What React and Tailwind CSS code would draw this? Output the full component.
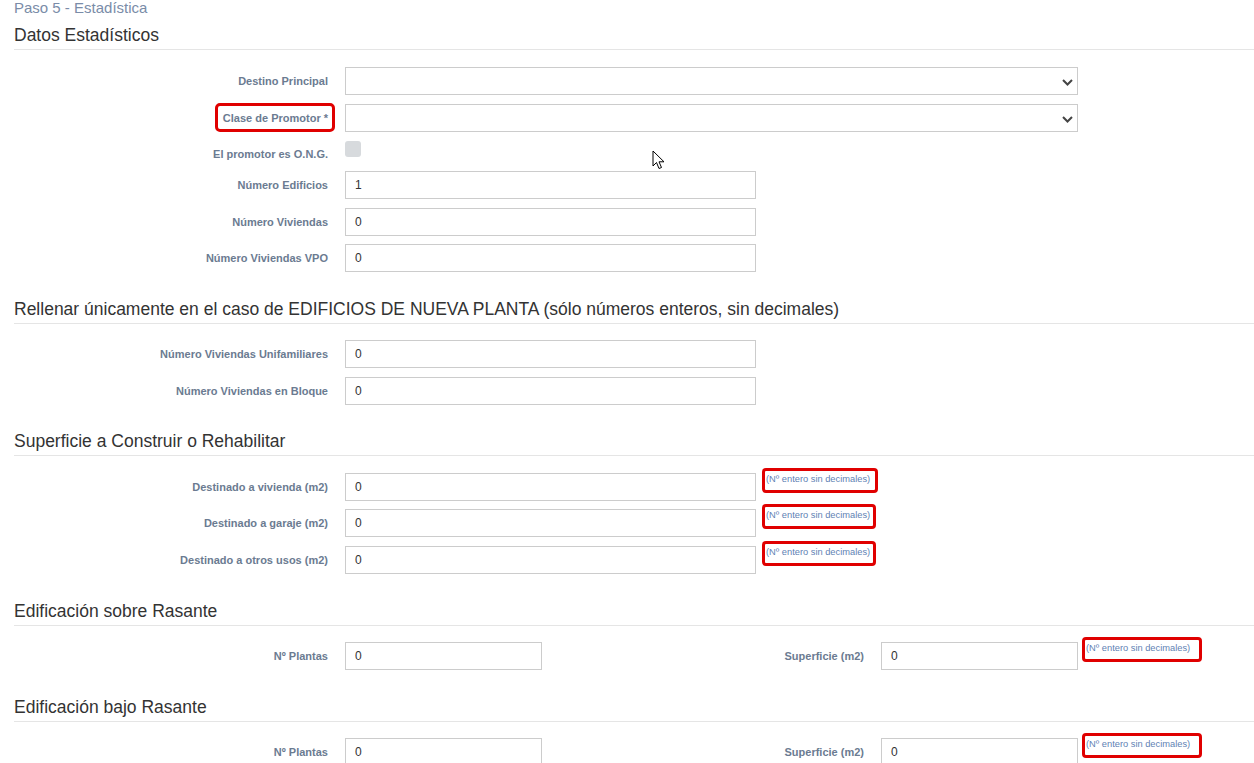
import React from "react";

const LABEL = "text-[11px] font-bold text-[#6b7b91] leading-[14px]";

function Hint({ w = "w-[116px]", className = "" }) {
  return (
    <div
      className={`self-start shrink-0 -mt-[5px] ${w} h-[25px] border-[3px] border-[#e00000] rounded-[4px] pl-[1px] flex items-center ${className}`}
    >
      <span className="block text-[9.3px] leading-[11px] text-[#5f82b4] -mt-[2px] whitespace-nowrap">
        (Nº entero sin decimales)
      </span>
    </div>
  );
}

function Chevron() {
  return (
    <svg width="11" height="7" viewBox="0 0 11 7" className="absolute right-[4px] top-[11px]">
      <path d="M1 1 L5.5 5.5 L10 1" fill="none" stroke="#444" strokeWidth="2" />
    </svg>
  );
}

function SelectRow({ label, boxed }) {
  return (
    <div className="flex items-center h-[28px]">
      <div className="w-[331px] shrink-0 pr-[17px] flex justify-end leading-[14px]">
        {boxed ? (
          <span
            className={`${LABEL} border-[3px] border-[#e00000] rounded-[5px] pl-[5px] pr-[4px] -mr-[7px] h-[29px] flex items-center`}
          >
            {label}
          </span>
        ) : (
          <span className={LABEL}>{label}</span>
        )}
      </div>
      <div className="relative w-[733px] shrink-0 h-[28px] border border-[#ccc] bg-white">
        <Chevron />
      </div>
    </div>
  );
}

function InputRow({ label, value, hint, hintW }) {
  return (
    <div className="flex items-center h-[28px]">
      <div className="w-[331px] shrink-0 pr-[17px] text-right text-[11px] leading-[14px]">
        <span className={LABEL}>{label}</span>
      </div>
      <div className="w-[411px] shrink-0 h-[28px] border border-[#ccc] bg-white flex items-center pl-[9px] text-[12px] text-[#333]">
        {value}
      </div>
      {hint && <Hint w={hintW} className="ml-[6px]" />}
    </div>
  );
}

function HalfRow({ label, value, hint }) {
  return (
    <div className="flex items-center w-[536px] shrink-0 h-[28px]">
      <div className="w-[331px] shrink-0 pr-[17px] text-right text-[11px] leading-[14px]">
        <span className={LABEL}>{label}</span>
      </div>
      <div className="w-[197px] shrink-0 h-[28px] border border-[#ccc] bg-white flex items-center pl-[9px] text-[12px] text-[#333]">
        {value}
      </div>
      {hint && <Hint w="w-[120px]" className="ml-[4px]" />}
    </div>
  );
}

function Heading({ children, className = "" }) {
  return (
    <div
      className={`text-[17.5px] leading-[20px] text-[#333] pb-[4px] border-b border-[#e5e5e5] whitespace-nowrap ${className}`}
    >
      {children}
    </div>
  );
}

export default function App() {
  return (
    <div
      className="relative w-[1254px] h-[763px] overflow-hidden bg-white pl-[14px]"
      style={{ fontFamily: '"Liberation Sans", Arial, sans-serif' }}
    >
      <div className="h-[25px] text-[15px] leading-[10px] text-[#7a8ca8] pt-[3px]">
        Paso 5 - Estadística
      </div>
      <Heading>Datos Estadísticos</Heading>

      <div className="mt-[17px] flex flex-col gap-[8.5px]">
        <SelectRow label="Destino Principal" />
        <SelectRow label="Clase de Promotor *" boxed />
        <div className="flex h-[22.5px]">
          <div className="w-[331px] shrink-0 pr-[17px] text-right pt-[7px] text-[11px] leading-[14px]">
            <span className={LABEL}>El promotor es O.N.G.</span>
          </div>
          <div className="mt-[1px] w-[16px] h-[16px] rounded-[3px] bg-[#d7dadd]" />
        </div>
        <InputRow label="Número Edificios" value="1" />
        <InputRow label="Número Viviendas" value="0" />
        <InputRow label="Número Viviendas VPO" value="0" />
      </div>

      <Heading className="mt-[27px]">
        Rellenar únicamente en el caso de EDIFICIOS DE NUEVA PLANTA (sólo números enteros, sin decimales)
      </Heading>
      <div className="mt-[16px] flex flex-col gap-[8.5px]">
        <InputRow label="Número Viviendas Unifamiliares" value="0" />
        <InputRow label="Número Viviendas en Bloque" value="0" />
      </div>

      <Heading className="mt-[26px]">Superficie a Construir o Rehabilitar</Heading>
      <div className="mt-[17px] flex flex-col gap-[8.5px]">
        <InputRow label="Destinado a vivienda (m2)" value="0" hint hintW="w-[116px]" />
        <InputRow label="Destinado a garaje (m2)" value="0" hint hintW="w-[114px]" />
        <InputRow label="Destinado a otros usos (m2)" value="0" hint hintW="w-[114px]" />
      </div>

      <Heading className="mt-[27px]">Edificación sobre Rasante</Heading>
      <div className="mt-[16px] flex">
        <HalfRow label="Nº Plantas" value="0" />
        <HalfRow label="Superficie (m2)" value="0" hint />
      </div>

      <Heading className="mt-[27px]">Edificación bajo Rasante</Heading>
      <div className="mt-[16px] flex">
        <HalfRow label="Nº Plantas" value="0" />
        <HalfRow label="Superficie (m2)" value="0" hint />
      </div>

      <svg
        className="absolute left-[652px] top-[150px]"
        width="14"
        height="21"
        viewBox="0 0 14 21"
      >
        <path
          d="M1 1 L1 16 L4.5 12.5 L7 18.5 L9.5 17.5 L7 11.8 L12 11.8 Z"
          fill="white"
          stroke="#000"
          strokeWidth="1"
          strokeLinejoin="miter"
        />
      </svg>
    </div>
  );
}
